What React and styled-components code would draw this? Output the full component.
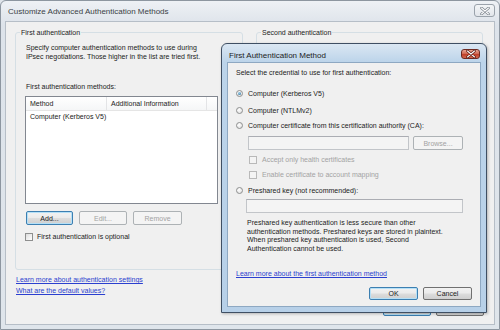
import React from 'react';
import styled, { createGlobalStyle, css } from 'styled-components';

const GlobalStyle = createGlobalStyle`
  * { box-sizing: border-box; }
  html, body {
    margin: 0;
    padding: 0;
    background: #dfe4ea;
  }
  body {
    font-family: "Liberation Sans", Arial, sans-serif;
    font-size: 7px;
    color: #222;
  }
`;

const Window = styled.div`
  position: relative;
  width: 500px;
  height: 330px;
  display: flex;
  flex-direction: column;
  border: 1px solid #8d96a0;
  border-radius: 6px 6px 0 0;
  background: linear-gradient(#eef1f5, #dde3ea 24px, #dfe5eb);
  padding: 0 4px 4px;
`;

const TitleBar = styled.div`
  height: 20px;
  display: flex;
  align-items: flex-start;
  justify-content: space-between;
`;

const TitleText = styled.span`
  font-size: 8px;
  line-height: 10px;
  padding: 6px 0 0 3px;
  color: ${(p) => (p.$active ? '#1b1b1b' : '#3a3f45')};
`;

const CloseButton = styled.div`
  display: flex;
  align-items: center;
  justify-content: center;
  border-radius: 3px;
  ${(p) =>
    p.$active
      ? css`
          width: 19px;
          height: 10px;
          margin-top: 5px;
          border: 1px solid #6e2b22;
          background: linear-gradient(#eba795, #d26b55 45%, #c0412a 55%, #d5694f);
        `
      : css`
          width: 21px;
          height: 13px;
          margin-top: 3px;
          border: 1px solid #9aa2ab;
          background: linear-gradient(#f3f5f7, #e2e6eb);
        `}
`;

const Client = styled.div`
  flex: 1;
  display: flex;
  flex-direction: column;
  background: #f0f0f0;
  border: 1px solid #b6bec7;
  padding-bottom: 8px;
`;

const Groups = styled.div`
  display: grid;
  grid-template-columns: 228px 227px;
  column-gap: 13px;
  margin: 6px 0 0 9px;
`;

const GroupBox = styled.fieldset`
  margin: 0;
  min-width: 0;
  height: 242px;
  border: 1px solid #d5dfe5;
  border-radius: 3px;
  padding: 6px 9px 0 10px;
  display: flex;
  flex-direction: column;
  align-items: flex-start;
`;

const Legend = styled.legend`
  padding: 0 1px;
  margin-left: -6px;
  line-height: 9px;
  color: #222;
`;

const Text = styled.p`
  margin: ${(p) => p.$mt || 0}px 0 0 ${(p) => p.$ml || 0}px;
  line-height: ${(p) => p.$lh || 9}px;
  white-space: pre-line;
  color: ${(p) => (p.$disabled ? '#a3a3a3' : '#222')};
`;

const ListView = styled.div`
  margin: 5px 0 0 -1px;
  width: 193px;
  height: 108px;
  background: #fff;
  border: 1px solid #828790;
`;

const ListHeader = styled.div`
  display: grid;
  grid-template-columns: 81px 100px 1fr;
  height: 14px;
  background: linear-gradient(#ffffff, #f5f6f7);
  border-bottom: 1px solid #e5e5e5;
`;

const HeaderCell = styled.div`
  padding-left: 4px;
  line-height: 13px;
  border-right: 1px solid #e3e4e6;
  &:last-child { border-right: none; }
`;

const ListRow = styled.div`
  padding-left: 4px;
  margin-top: 1px;
  line-height: 9px;
`;

const ButtonRow = styled.div`
  display: flex;
  gap: ${(p) => p.$gap || 6}px;
  margin-top: ${(p) => p.$mt || 0}px;
  align-self: ${(p) => (p.$end ? 'flex-end' : 'auto')};
`;

const Button = styled.button`
  width: ${(p) => p.$w || 48}px;
  height: ${(p) => p.$h || 14}px;
  padding: 0;
  font: inherit;
  line-height: 1;
  border-radius: 2px;
  color: #222;
  border: 1px solid #707070;
  background: linear-gradient(#f2f2f2 0%, #ebebeb 48%, #dddddd 52%, #cfcfcf 100%);
  ${(p) =>
    p.$default &&
    css`
      border-color: #3c7fb1;
      box-shadow: inset 0 0 0 1px #b5e0f7;
    `}
  ${(p) =>
    p.disabled &&
    css`
      color: #a3a3a3;
      border-color: #adb2b5;
      background: #f4f4f4;
    `}
`;

const OptionRow = styled.label`
  display: flex;
  align-items: center;
  gap: ${(p) => p.$gap || 5}px;
  margin: ${(p) => p.$mt || 0}px 0 0 ${(p) => p.$ml || 0}px;
  line-height: 9px;
  color: ${(p) => (p.$disabled ? '#a3a3a3' : '#222')};
`;

const Radio = styled.span`
  position: relative;
  width: 7px;
  height: 7px;
  border-radius: 50%;
  border: 1px solid #8e8f8f;
  background: radial-gradient(circle at 40% 35%, #ffffff, #dcdcdc);
  ${(p) =>
    p.$checked &&
    css`
      &::after {
        content: '';
        position: absolute;
        inset: 1px;
        border-radius: 50%;
        background: radial-gradient(circle at 40% 35%, #9fd6f0, #1e5f8c);
      }
    `}
`;

const Check = styled.span`
  width: 8px;
  height: 8px;
  border: 1px solid ${(p) => (p.$disabled ? '#b9b9b9' : '#8e8f8f')};
  background: ${(p) => (p.$disabled ? '#f4f4f4' : 'linear-gradient(135deg, #dcdcdc, #ffffff)')};
`;

const Field = styled.div`
  width: ${(p) => p.$w}px;
  height: 14px;
  margin-left: ${(p) => p.$ml || 0}px;
  margin-top: ${(p) => p.$mt || 0}px;
  border: 1px solid #c2c5c9;
  border-top-color: #abadb3;
  background: #f4f4f4;
`;

const FieldRow = styled.div`
  display: flex;
  gap: 4px;
  margin: ${(p) => p.$mt || 0}px 0 0 ${(p) => p.$ml || 0}px;
`;

const Link = styled.a`
  display: block;
  color: #2b3fcf;
  text-decoration: underline;
  line-height: ${(p) => p.$lh || 9}px;
  margin-top: ${(p) => p.$mt || 0}px;
  cursor: pointer;
`;

const BottomRow = styled.div`
  flex: 1;
  display: flex;
  justify-content: space-between;
  align-items: flex-end;
  padding: 0 10px 0 10px;
`;

const Links = styled.div`
  align-self: flex-start;
  margin-top: 4px;
`;

const Dialog = styled.div`
  position: absolute;
  left: 220px;
  top: 42px;
  width: 266px;
  height: 270px;
  display: flex;
  flex-direction: column;
  border: 1px solid #3f4f63;
  border-radius: 6px 6px 0 0;
  background: linear-gradient(#dbe7f3, #bcd4ea 18px, #b7d0e8);
  padding: 0 5px 5px;
  box-shadow: 1px 1px 3px rgba(0, 0, 0, 0.25);
`;

const DialogTitle = styled.div`
  height: 18px;
  display: flex;
  align-items: flex-start;
  justify-content: space-between;
  padding-right: 1px;
`;

const DialogClient = styled.div`
  flex: 1;
  display: flex;
  flex-direction: column;
  align-items: flex-start;
  background: #f0f0f0;
  border: 1px solid #8ea8c2;
  padding: 5px 8px 0 8px;
`;

function CloseGlyph({ active }) {
  const d = 'M1.5 1 L8.5 7 M8.5 1 L1.5 7';
  return (
    <svg width="10" height="8" viewBox="0 0 10 8">
      <path d={d} stroke={active ? '#5a1a10' : '#7b838c'} strokeWidth="2.6" strokeLinecap="round" />
      <path d={d} stroke="#ffffff" strokeWidth="1.1" strokeLinecap="round" />
    </svg>
  );
}

function FirstAuthDialog() {
  return (
    <Dialog>
      <DialogTitle>
        <TitleText $active style={{ paddingTop: 7, paddingLeft: 2 }}>
          First Authentication Method
        </TitleText>
        <CloseButton $active>
          <CloseGlyph active />
        </CloseButton>
      </DialogTitle>
      <DialogClient>
        <Text>Select the credential to use for first authentication:</Text>
        <OptionRow $mt={12}>
          <Radio $checked />
          Computer (Kerberos V5)
        </OptionRow>
        <OptionRow $mt={8}>
          <Radio />
          Computer (NTLMv2)
        </OptionRow>
        <OptionRow $mt={6}>
          <Radio />
          Computer certificate from this certification authority (CA):
        </OptionRow>
        <FieldRow $mt={6} $ml={12}>
          <Field $w={161} />
          <Button disabled $w={50}>Browse...</Button>
        </FieldRow>
        <OptionRow $mt={5} $ml={13} $disabled>
          <Check $disabled />
          Accept only health certificates
        </OptionRow>
        <OptionRow $mt={6} $ml={13} $disabled>
          <Check $disabled />
          Enable certificate to account mapping
        </OptionRow>
        <OptionRow $mt={7}>
          <Radio />
          Preshared key (not recommended):
        </OptionRow>
        <Field $w={217} $ml={10} $mt={4} />
        <Text $mt={6} $ml={11} $lh={8.5}>
          {'Preshared key authentication is less secure than other\nauthentication methods. Preshared keys are stored in plaintext.\nWhen preshared key authentication is used, Second\nAuthentication cannot be used.'}
        </Text>
        <Link $mt={16}>Learn more about the first authentication method</Link>
        <ButtonRow $mt={9} $gap={5} $end>
          <Button $default $w={49} $h={13}>OK</Button>
          <Button $w={49} $h={13}>Cancel</Button>
        </ButtonRow>
      </DialogClient>
    </Dialog>
  );
}

export default function App() {
  return (
    <>
      <GlobalStyle />
      <Window>
        <TitleBar>
          <TitleText>Customize Advanced Authentication Methods</TitleText>
          <CloseButton>
            <CloseGlyph />
          </CloseButton>
        </TitleBar>
        <Client>
          <Groups>
            <GroupBox>
              <Legend>First authentication</Legend>
              <Text>
                {'Specify computer authentication methods to use during\nIPsec negotiations.  Those higher in the list are tried first.'}
              </Text>
              <Text $mt={21}>First authentication methods:</Text>
              <ListView>
                <ListHeader>
                  <HeaderCell>Method</HeaderCell>
                  <HeaderCell>Additional Information</HeaderCell>
                  <HeaderCell />
                </ListHeader>
                <ListRow>Computer (Kerberos V5)</ListRow>
              </ListView>
              <ButtonRow $mt={7} $gap={6}>
                <Button $default $w={47}>Add...</Button>
                <Button disabled $w={48}>Edit...</Button>
                <Button disabled $w={49}>Remove</Button>
              </ButtonRow>
              <OptionRow $mt={7} $gap={4} $ml={-1}>
                <Check />
                First authentication is optional
              </OptionRow>
            </GroupBox>
            <GroupBox>
              <Legend>Second authentication</Legend>
            </GroupBox>
          </Groups>
          <BottomRow>
            <Links>
              <Link $lh={11}>Learn more about authentication settings</Link>
              <Link $lh={11}>What are the default values?</Link>
            </Links>
            <ButtonRow $gap={5}>
              <Button $default $w={48} $h={15}>OK</Button>
              <Button $w={48} $h={15}>Cancel</Button>
            </ButtonRow>
          </BottomRow>
        </Client>
        <FirstAuthDialog />
      </Window>
    </>
  );
}
